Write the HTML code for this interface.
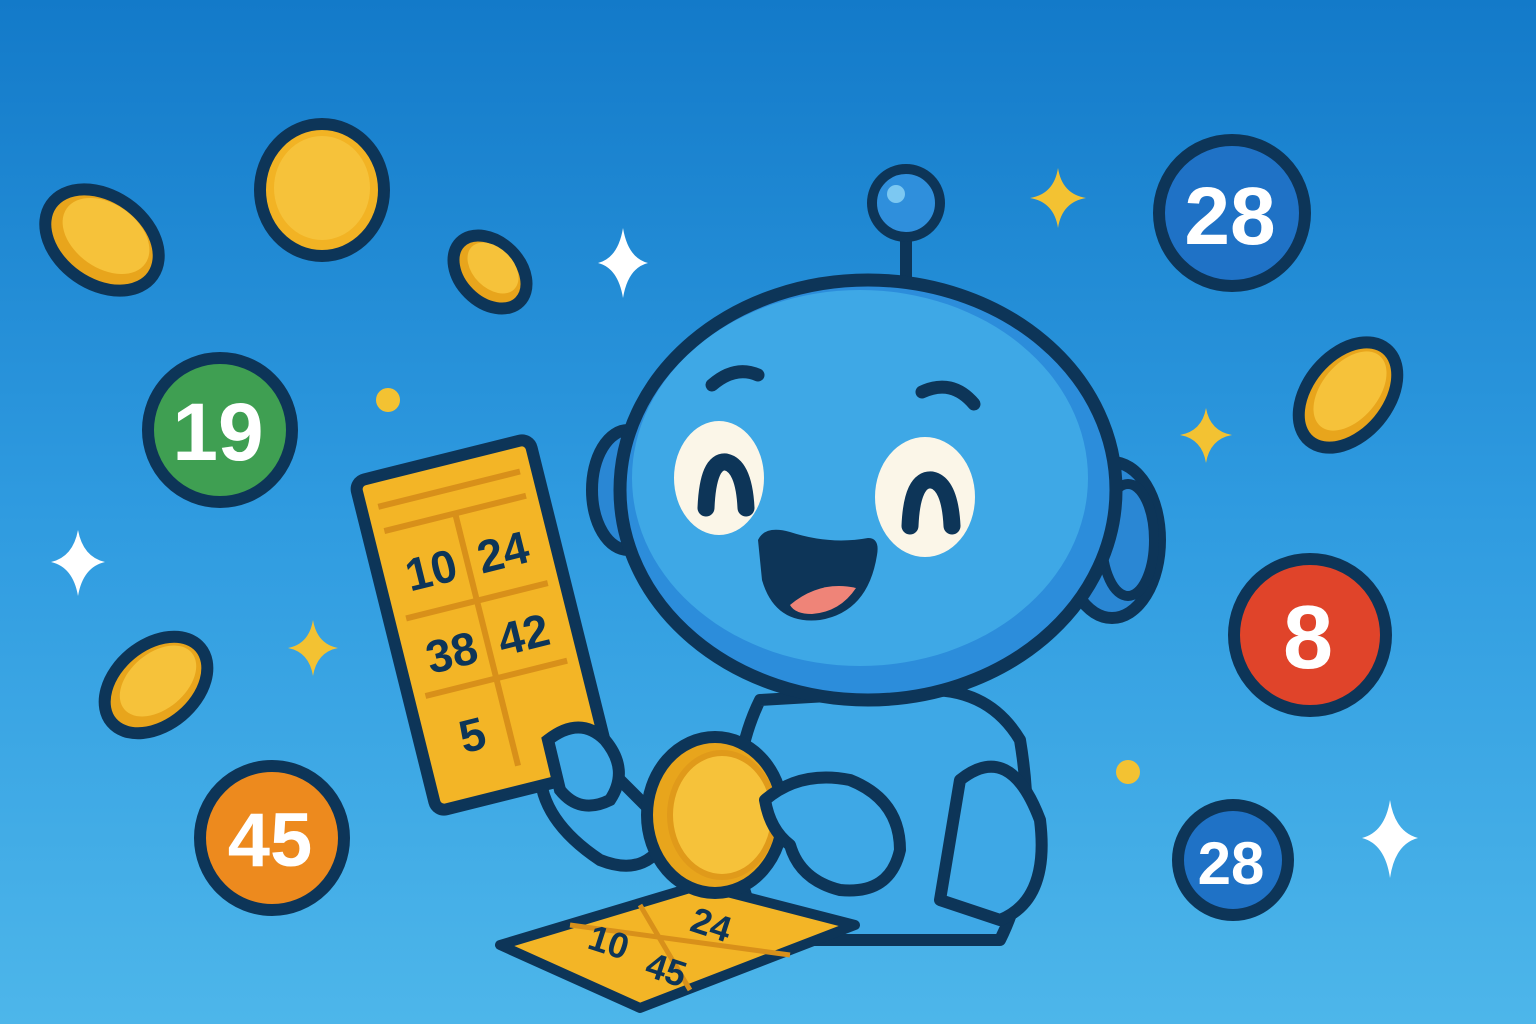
<!DOCTYPE html>
<html><head><meta charset="utf-8"><style>
html,body{margin:0;padding:0;width:1536px;height:1024px;overflow:hidden}
svg{display:block}
text{font-family:"Liberation Sans",sans-serif;font-weight:bold}
</style></head><body>
<svg width="1536" height="1024" viewBox="0 0 1536 1024" xmlns="http://www.w3.org/2000/svg">
<defs>
<linearGradient id="bg" x1="0" y1="0" x2="0" y2="1">
<stop offset="0" stop-color="#137ac9"/><stop offset="0.5" stop-color="#2f9be0"/><stop offset="1" stop-color="#4db6ea"/>
</linearGradient>
</defs>
<rect width="1536" height="1024" fill="url(#bg)"/>

<g stroke="#0d3558" stroke-width="12">
<ellipse cx="102" cy="240" rx="62" ry="44" transform="rotate(35 102 240)" fill="#e8a51c"/>
<ellipse cx="322" cy="190" rx="62" ry="66" fill="#f2b324"/>
<ellipse cx="490" cy="272" rx="42" ry="30" transform="rotate(45 490 272)" fill="#e8a51c"/>
<ellipse cx="156" cy="685" rx="58" ry="40" transform="rotate(-40 156 685)" fill="#e8a51c"/>
<ellipse cx="1348" cy="395" rx="60" ry="40" transform="rotate(-50 1348 395)" fill="#e8a51c"/>
</g>
<g fill="#f6c23a">
<ellipse cx="106" cy="236" rx="48" ry="32" transform="rotate(35 106 236)"/>
<ellipse cx="322" cy="188" rx="48" ry="52"/>
<ellipse cx="493" cy="268" rx="30" ry="20" transform="rotate(45 493 268)"/>
<ellipse cx="158" cy="681" rx="44" ry="28" transform="rotate(-40 158 681)"/>
<ellipse cx="1350" cy="391" rx="46" ry="28" transform="rotate(-50 1350 391)"/>
</g>

<g stroke="#0d3558" stroke-width="12">
<circle cx="220" cy="430" r="72" fill="#3f9f52"/>
<circle cx="1232" cy="213" r="73" fill="#1f72c6"/>
<circle cx="1310" cy="635" r="76" fill="#e0442a"/>
<circle cx="272" cy="838" r="72" fill="#ed8a1e"/>
<circle cx="1233" cy="860" r="55" fill="#1f72c6"/>
</g>
<g fill="#fff" text-anchor="middle">
<text x="218" y="460" font-size="82">19</text>
<text x="1230" y="244" font-size="82">28</text>
<text x="1308" y="668" font-size="90">8</text>
<text x="270" y="866" font-size="76">45</text>
<text x="1231" y="884" font-size="60">28</text>
</g>

<g fill="#fff">
<path d="M623 228 Q628 258 648 263 Q628 268 623 298 Q618 268 598 263 Q618 258 623 228Z"/>
<path d="M78 530 Q83 557 105 562 Q83 567 78 596 Q73 567 51 562 Q73 557 78 530Z"/>
<path d="M1390 800 Q1395 832 1418 838 Q1395 844 1390 878 Q1385 844 1362 838 Q1385 832 1390 800Z"/>
</g>
<g fill="#f3c232">
<path d="M1058 168 Q1062 194 1086 198 Q1062 202 1058 228 Q1054 202 1030 198 Q1054 194 1058 168Z"/>
<path d="M1206 408 Q1210 431 1232 435 Q1210 439 1206 463 Q1202 439 1180 435 Q1202 431 1206 408Z"/>
<path d="M313 620 Q317 644 338 648 Q317 652 313 676 Q309 652 288 648 Q309 644 313 620Z"/>
<circle cx="388" cy="400" r="12"/><circle cx="1128" cy="772" r="12"/>
</g>

<g stroke="#0d3558" stroke-width="12" stroke-linejoin="round">
<path d="M760 700 Q730 760 735 860 L760 940 L1000 940 Q1040 860 1020 740 Q990 690 930 690 Z" fill="#3ea8e6"/>
<path d="M960 780 Q1010 740 1040 820 Q1050 900 1000 920 L940 900 Z" fill="#3ea8e6"/>
<path d="M620 780 Q560 720 540 770 Q540 820 600 860 Q650 880 670 830 Z" fill="#3ea8e6"/>
</g>

<g transform="rotate(-14 483 625)" stroke="#0d3558">
<rect x="393" y="455" width="180" height="340" rx="10" fill="#f3b526" stroke-width="12"/>
<g stroke="#d8901a" stroke-width="6">
<line x1="410" y1="485" x2="556" y2="485"/><line x1="410" y1="510" x2="556" y2="510"/>
<line x1="483" y1="510" x2="483" y2="770"/><line x1="410" y1="600" x2="556" y2="600"/><line x1="410" y1="680" x2="556" y2="680"/>
</g>
<g fill="#0d3558" stroke="none" font-size="46" text-anchor="middle">
<text x="446" y="575">10</text><text x="520" y="575">24</text>
<text x="446" y="660">38</text><text x="520" y="660">42</text>
<text x="446" y="745">5</text>
</g>
</g>
<path d="M548 740 Q580 715 605 740 Q630 770 610 800 Q580 815 560 790 Z" fill="#3ea8e6" stroke="#0d3558" stroke-width="12"/>

<path d="M500 945 L700 885 L855 925 L640 1008 Z" fill="#f3b526" stroke="#0d3558" stroke-width="10" stroke-linejoin="round"/>
<g stroke="#d8901a" stroke-width="5">
<line x1="570" y1="925" x2="790" y2="955"/><line x1="640" y1="905" x2="690" y2="990"/>
</g>
<g fill="#0d3558" font-size="36">
<text x="588" y="955" transform="rotate(18 610 945)">10</text>
<text x="690" y="940" transform="rotate(18 720 930)">24</text>
<text x="645" y="985" transform="rotate(18 675 975)">45</text>
</g>

<ellipse cx="715" cy="815" rx="68" ry="78" fill="#e8a51c" stroke="#0d3558" stroke-width="12"/>
<ellipse cx="722" cy="815" rx="52" ry="62" fill="#f6c23a" stroke="#e09a1a" stroke-width="6"/>
<path d="M765 800 Q800 770 850 780 Q900 800 900 850 Q890 895 840 890 Q800 880 790 845 Q770 830 765 800Z" fill="#3ea8e6" stroke="#0d3558" stroke-width="12" stroke-linejoin="round"/>

<line x1="906" y1="235" x2="906" y2="290" stroke="#0d3558" stroke-width="12"/>
<circle cx="906" cy="203" r="34" fill="#2f8fdc" stroke="#0d3558" stroke-width="10"/>
<circle cx="896" cy="194" r="9" fill="#7cc8f2"/>

<ellipse cx="628" cy="490" rx="36" ry="60" fill="#2a87d4" stroke="#0d3558" stroke-width="12"/>
<ellipse cx="1112" cy="540" rx="48" ry="78" fill="#2a87d4" stroke="#0d3558" stroke-width="12"/>
<ellipse cx="1128" cy="540" rx="26" ry="56" fill="#2a87d4" stroke="#0d3558" stroke-width="10"/>

<ellipse cx="868" cy="490" rx="248" ry="210" fill="#2c8ddb" stroke="#0d3558" stroke-width="13"/>
<ellipse cx="860" cy="478" rx="228" ry="188" fill="#3ea8e6"/>

<g fill="none" stroke="#0d3558" stroke-width="13" stroke-linecap="round">
<path d="M712 385 Q735 365 758 375"/>
<path d="M922 392 Q952 378 974 404"/>
</g>
<ellipse cx="719" cy="478" rx="45" ry="57" fill="#fbf6e8"/>
<ellipse cx="925" cy="497" rx="50" ry="60" fill="#fbf6e8"/>
<g fill="none" stroke="#0d3558" stroke-width="17" stroke-linecap="round">
<path d="M706 508 Q708 460 726 462 Q744 466 746 508"/>
<path d="M910 526 Q912 478 932 480 Q950 484 952 526"/>
</g>
<path d="M758 540 Q765 525 790 532 Q830 545 868 538 Q880 538 877 555 Q868 612 820 620 Q775 625 762 580 Z" fill="#0d3558"/>
<path d="M790 605 Q820 580 856 588 Q840 612 812 614 Q795 614 790 605Z" fill="#ef8478"/>
</svg>
</body></html>
